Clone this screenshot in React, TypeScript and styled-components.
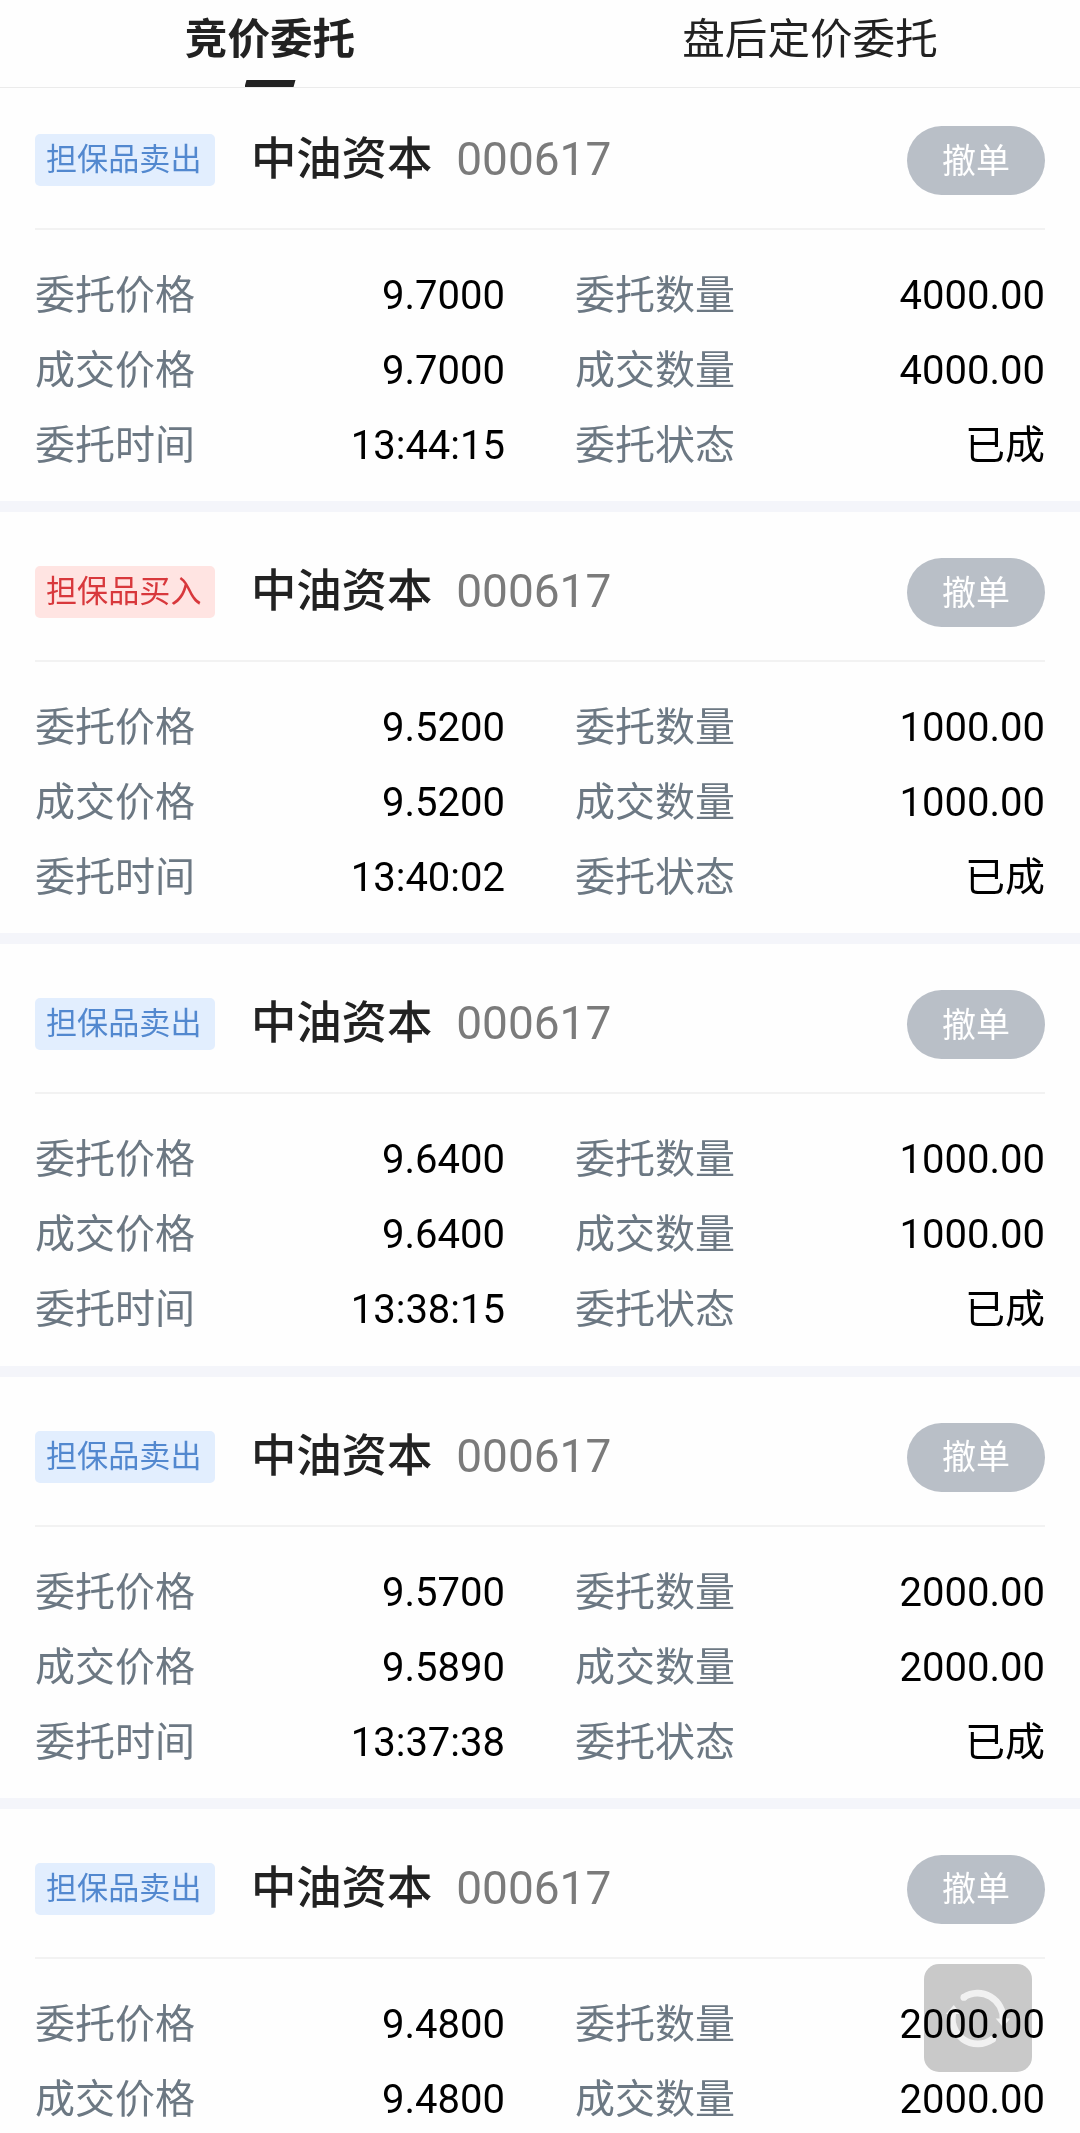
import React from "react";
import styled, { createGlobalStyle } from "styled-components";

const Global = createGlobalStyle`
  * { box-sizing: border-box; }
  html, body { margin: 0; padding: 0; background: #fefefe; }
  body { font-family: Roboto, "Noto Sans CJK SC", sans-serif; color: #000; }
`;

const Screen = styled.div`
  position: relative;
  width: 1080px;
  height: 2133px;
  overflow: hidden;
  background: #fefefe;
`;

const Tabs = styled.nav`
  display: grid;
  grid-template-columns: 1fr 1fr;
  height: 88px;
  border-bottom: 1px solid #ebebeb;
`;

const Tab = styled.div<{ $active?: boolean }>`
  display: flex;
  flex-direction: column;
  align-items: center;
  justify-content: space-between;
  font-size: 42.6px;
  line-height: 78px;
  color: #222;
  font-weight: ${(p) => (p.$active ? 700 : 400)};
`;

const Indicator = styled.span`
  width: 51px;
  height: 7px;
  background: #222;
  clip-path: polygon(2px 0, 100% 0, 49px 100%, 0 100%);
`;

const CardHead = styled.header`
  display: flex;
  align-items: center;
  height: 150px;
  padding-top: 12px;
  border-bottom: 2px solid #f2f2f2;
`;

const Card = styled.article<{ $first: boolean }>`
  height: ${(p) => (p.$first ? 424 : 432.33)}px;
  padding: 0 35px;
  border-bottom: 11px solid #f4f5fa;

  ${CardHead} {
    ${(p) => p.$first && "height: 142px; padding-top: 4px;"}
  }
`;

const Tag = styled.span<{ $buy: boolean }>`
  width: 180px;
  height: 52px;
  padding-left: 11px;
  border-radius: 5px;
  font-size: 31.1px;
  line-height: 52px;
  white-space: nowrap;
  color: ${(p) => (p.$buy ? "#d8383c" : "#5288cf")};
  background: ${(p) => (p.$buy ? "#ffe4e2" : "#e2eefe")};
`;

const Name = styled.h2`
  margin: 0 0 0 36px;
  font-size: 45.3px;
  line-height: 60px;
  font-weight: 500;
  color: #222;
`;

const Code = styled.span`
  margin: -2px 0 0 24px;
  font-size: 46px;
  line-height: 60px;
  color: #7b7b7b;
`;

const CancelButton = styled.button`
  margin: 1px 0 0 auto;
  width: 138px;
  height: 69px;
  padding: 0;
  border: 0;
  border-radius: 34.5px;
  background: #b9bfc7;
  color: #fff;
  font: inherit;
  font-size: 34px;
  line-height: 66px;
`;

const Details = styled.dl`
  display: grid;
  grid-template-columns: 1fr 1fr;
  column-gap: 70px;
  grid-auto-rows: 75px;
  margin: 0;
  padding-top: 28px;
`;

const Field = styled.div`
  display: flex;
  justify-content: space-between;
  font-size: 40px;
  line-height: 75px;
`;

const Label = styled.dt`
  color: #6c7883;
`;

const Value = styled.dd`
  margin: 0;
  color: #000;
`;

const RefreshButton = styled.button`
  position: absolute;
  left: 924px;
  top: 1964px;
  width: 108px;
  height: 108px;
  padding: 0;
  border: 0;
  border-radius: 15px;
  background: #cacaca;
  mix-blend-mode: multiply;
  display: flex;
  align-items: center;
  justify-content: center;
`;

interface Order {
  buy: boolean;
  price: string;
  dealPrice: string;
  time: string;
  amount: string;
}

const orders: Order[] = [
  { buy: false, price: "9.7000", dealPrice: "9.7000", time: "13:44:15", amount: "4000.00" },
  { buy: true, price: "9.5200", dealPrice: "9.5200", time: "13:40:02", amount: "1000.00" },
  { buy: false, price: "9.6400", dealPrice: "9.6400", time: "13:38:15", amount: "1000.00" },
  { buy: false, price: "9.5700", dealPrice: "9.5890", time: "13:37:38", amount: "2000.00" },
  { buy: false, price: "9.4800", dealPrice: "9.4800", time: "", amount: "2000.00" },
];

function OrderCard({ order, first }: { order: Order; first: boolean }) {
  const fields = [
    ["委托价格", order.price],
    ["委托数量", order.amount],
    ["成交价格", order.dealPrice],
    ["成交数量", order.amount],
  ];
  if (order.time) fields.push(["委托时间", order.time], ["委托状态", "已成"]);
  return (
    <Card $first={first}>
      <CardHead>
        <Tag $buy={order.buy}>{order.buy ? "担保品买入" : "担保品卖出"}</Tag>
        <Name>中油资本</Name>
        <Code>000617</Code>
        <CancelButton>撤单</CancelButton>
      </CardHead>
      <Details>
        {fields.map(([label, value]) => (
          <Field key={label}>
            <Label>{label}</Label>
            <Value>{value}</Value>
          </Field>
        ))}
      </Details>
    </Card>
  );
}

export default function App() {
  return (
    <Screen>
      <Global />
      <Tabs>
        <Tab $active>
          竞价委托
          <Indicator />
        </Tab>
        <Tab>盘后定价委托</Tab>
      </Tabs>
      {orders.map((order, index) => (
        <OrderCard key={order.price} order={order} first={index === 0} />
      ))}
      <RefreshButton aria-label="刷新">
        <svg width="68" height="68" viewBox="-34 -34 68 68" fill="none">
          <g stroke="#f2f2f2" strokeWidth="6.7">
            <path d="M-14.2 -20.6 A25.3 25.3 0 0 1 25 2" />
            <path d="M14.8 21 A25.5 25.5 0 0 1 -24.6 -7" />
          </g>
          <g fill="#f2f2f2">
            <circle cx="-14.2" cy="-20.6" r="3.35" />
            <circle cx="14.8" cy="21" r="3.35" />
            <path d="M17.7 0.6H32.3L25 9Z" />
            <path d="M-32 -4H-17.4L-24.2 -13Z" />
          </g>
        </svg>
      </RefreshButton>
    </Screen>
  );
}
